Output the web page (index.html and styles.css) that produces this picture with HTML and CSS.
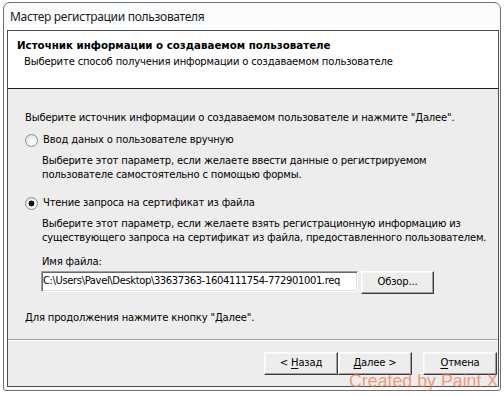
FILE: index.html
```html
<!DOCTYPE html>
<html lang="ru">
<head>
<meta charset="utf-8">
<title>Мастер регистрации пользователя</title>
<link rel="stylesheet" href="styles.css">
</head>
<body>
<div class="desktop">
  <div class="window">
    <div class="titlebar">Мастер регистрации пользователя</div>
    <div class="client">
      <div class="header">
        <div class="h-title">Источник информации о создаваемом пользователе</div>
        <div class="h-sub">Выберите способ получения информации о создаваемом пользователе</div>
      </div>
      <div class="body">
        <div class="line intro">Выберите источник информации о создаваемом пользователе и нажмите "Далее".</div>
        <div class="opt opt1"><span class="radio"></span><span class="line">Ввод даных о пользователе вручную</span></div>
        <div class="desc">
          <div class="line">Выберите этот параметр, если желаете ввести данные о регистрируемом</div>
          <div class="line">пользователе самостоятельно с помощью формы.</div>
        </div>
        <div class="opt opt2"><span class="radio checked"></span><span class="line">Чтение запроса на сертификат из файла</span></div>
        <div class="desc">
          <div class="line">Выберите этот параметр, если желаете взять регистрационную информацию из</div>
          <div class="line">существующего запроса на сертификат из файла, предоставленного пользователем.</div>
        </div>
        <div class="line fname-label">Имя файла:</div>
        <div class="file-row">
          <div class="textbox">C:\Users\Pavel\Desktop\33637363-1604111754-772901001.req</div>
          <div class="btn browse">Обзор...</div>
        </div>
        <div class="line outro">Для продолжения нажмите кнопку "Далее".</div>
      </div>
      <div class="footer">
        <div class="btn">&lt; <u>Н</u>азад</div>
        <div class="btn"><u>Д</u>алее &gt;</div>
        <div class="btn cancel"><u>О</u>тмена</div>
      </div>
    </div>
  </div>
  <div class="watermark">Created by Paint X</div>
</div>
</body>
</html>
```

FILE: styles.css
```css
* { box-sizing: border-box; }

html, body {
  margin: 0;
  padding: 0;
  width: 504px;
  height: 396px;
  overflow: hidden;
  background: #ffffff;
}

.desktop {
  position: relative;
  width: 504px;
  height: 396px;
  padding: 2px 0 0 3px;
}

.window {
  width: 498px;
  height: 389px;
  border: 1px solid #6f6f6f;
  border-radius: 7px 7px 3px 3px;
  background: #fbfcfe;
}

.titlebar {
  height: 27px;
  line-height: 27px;
  padding-left: 6px;
  font-family: "Noto Sans", sans-serif;
  font-size: 12px;
  letter-spacing: -0.3px;
  color: #1a1a1a;
  white-space: nowrap;
}

.client {
  margin-left: 3px;
  width: 492px;
  height: 357px;
  border: 1px solid #4d4d4d;
  background: #ededed;
  display: flex;
  flex-direction: column;
  font-family: "DejaVu Sans", sans-serif;
  font-size: 10px;
  letter-spacing: -0.16px;
  color: #000;
}

.line {
  display: block;
  height: 14px;
  line-height: 14px;
  white-space: nowrap;
}

.header {
  height: 58px;
  background: #ffffff;
  border-bottom: 1px solid #1a1a1a;
  padding: 7px 0 0 9px;
}

.h-title {
  height: 14px;
  line-height: 14px;
  font-weight: bold;
  font-size: 10.25px;
  letter-spacing: 0;
  white-space: nowrap;
}

.h-sub {
  margin-top: 3px;
  padding-left: 7px;
  height: 14px;
  line-height: 14px;
  white-space: nowrap;
}

.body {
  height: 251px;
  padding: 22px 0 0 17px;
  border-bottom: 1px solid #a0a0a0;
  box-shadow: 0 1px 0 #ffffff;
}

.opt {
  display: flex;
  align-items: center;
  height: 14px;
}

.opt1 { margin-top: 8px; }
.opt2 { margin-top: 14px; }

.radio {
  width: 13px;
  height: 13px;
  margin-right: 5px;
  border-radius: 50%;
  border: 1px solid #8a8c8e;
  background: radial-gradient(circle at 60% 65%, #ffffff 0%, #f4f4f4 40%, #d6d8da 100%);
  flex: none;
}

.radio.checked {
  background:
    radial-gradient(circle at 50% 50%, #111111 0, #111111 2.2px, #3a3a3a 2.8px, transparent 3.2px),
    radial-gradient(circle at 60% 65%, #ffffff 0%, #f4f4f4 40%, #d6d8da 100%);
}

.desc {
  margin-top: 7px;
  padding-left: 17px;
}

.fname-label {
  margin-top: 10px;
  padding-left: 17px;
}

.file-row {
  margin-top: 2px;
  padding-left: 16px;
  display: flex;
  align-items: flex-start;
  gap: 3px;
}

.textbox {
  width: 317px;
  height: 21px;
  line-height: 17px;
  padding-left: 1px;
  background: #ffffff;
  border: 1px solid;
  border-color: #a0a0a0 #ffffff #ffffff #a0a0a0;
  box-shadow: inset 1px 1px 0 #696969, inset -1px -1px 0 #e3e3e3;
  letter-spacing: -0.38px;
  white-space: nowrap;
  overflow: hidden;
}

.btn {
  width: 74px;
  height: 23px;
  line-height: 20px;
  text-align: center;
  background: #ededed;
  border: 1px solid;
  border-color: #ffffff #3c3c3c #3c3c3c #ffffff;
  box-shadow: inset -1px -1px 0 #a0a0a0, inset 1px 1px 0 #f7f7f7;
  white-space: nowrap;
  flex: none;
}

.btn u { text-underline-offset: 2px; }

.browse { width: 73px; }

.outro { margin-top: 17px; }

.footer {
  flex: 1;
  display: flex;
  justify-content: flex-end;
  padding: 12px 1px 0 0;
}

.footer .cancel { margin-left: 11px; }

.watermark {
  position: absolute;
  left: 349px;
  top: 370px;
  font-family: "Liberation Sans", sans-serif;
  font-size: 17.8px;
  line-height: 22px;
  color: rgba(250, 110, 60, 0.68);
  white-space: nowrap;
}
```
